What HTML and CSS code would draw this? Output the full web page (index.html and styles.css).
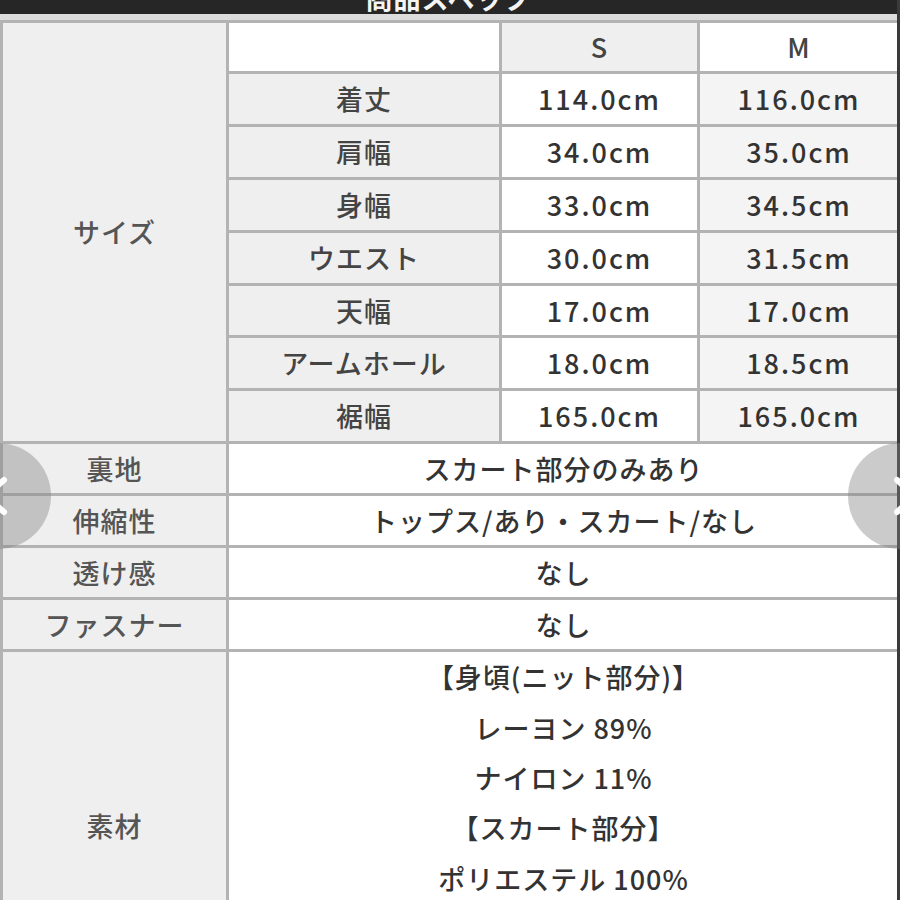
FILE: index.html
```html
<!DOCTYPE html>
<html lang="ja">
<head>
<meta charset="utf-8">
<title>商品スペック</title>
<link rel="stylesheet" href="styles.css">
</head>
<body>
<div class="page">
  <div class="sheet">
    <div class="titlebar"><div class="title">商品スペック</div></div>
    <div class="gap"></div>
    <table class="spec">
      <colgroup>
        <col class="c1"><col class="c2"><col class="c3"><col class="c4">
      </colgroup>
      <tr class="r-head">
        <th class="lab" rowspan="8">サイズ</th>
        <td class="blank"></td>
        <td class="sz g">S</td>
        <td class="sz w">M</td>
      </tr>
      <tr class="r"><td class="sub">着丈</td><td class="v w">114.0cm</td><td class="v m">116.0cm</td></tr>
      <tr class="r"><td class="sub">肩幅</td><td class="v w">34.0cm</td><td class="v m">35.0cm</td></tr>
      <tr class="r"><td class="sub">身幅</td><td class="v w">33.0cm</td><td class="v m">34.5cm</td></tr>
      <tr class="r"><td class="sub">ウエスト</td><td class="v w">30.0cm</td><td class="v m">31.5cm</td></tr>
      <tr class="r"><td class="sub">天幅</td><td class="v w">17.0cm</td><td class="v m">17.0cm</td></tr>
      <tr class="r"><td class="sub">アームホール</td><td class="v w">18.0cm</td><td class="v m">18.5cm</td></tr>
      <tr class="r"><td class="sub">裾幅</td><td class="v w">165.0cm</td><td class="v m">165.0cm</td></tr>
      <tr class="r2"><th class="lab">裏地</th><td class="wide" colspan="3">スカート部分のみあり</td></tr>
      <tr class="r2"><th class="lab">伸縮性</th><td class="wide" colspan="3">トップス/あり・スカート/なし</td></tr>
      <tr class="r2"><th class="lab">透け感</th><td class="wide" colspan="3">なし</td></tr>
      <tr class="r2"><th class="lab">ファスナー</th><td class="wide" colspan="3">なし</td></tr>
      <tr class="r3">
        <th class="lab">素材</th>
        <td class="wide mat" colspan="3">
          <div class="line">【身頃(ニット部分)】</div>
          <div class="line">レーヨン 89%</div>
          <div class="line">ナイロン 11%</div>
          <div class="line">【スカート部分】</div>
          <div class="line">ポリエステル 100%</div>
        </td>
      </tr>
    </table>
  </div>
  <div class="edge"></div>
</div>
<button class="nav prev" aria-label="前へ">
  <svg viewBox="0 0 40 60" width="40" height="60"><polyline points="30,14 12,30 30,46" fill="none" stroke="#fff" stroke-width="6" stroke-linecap="round" stroke-linejoin="round"/></svg>
</button>
<button class="nav next" aria-label="次へ">
  <svg viewBox="0 0 40 60" width="40" height="60"><polyline points="10,14 28,30 10,46" fill="none" stroke="#fff" stroke-width="6" stroke-linecap="round" stroke-linejoin="round"/></svg>
</button>
</body>
</html>
```
FILE: styles.css
```css
html, body {
  margin: 0;
  padding: 0;
  background: #ffffff;
  overflow: hidden;
}
body {
  width: 900px;
  height: 900px;
  position: relative;
  font-family: "Noto Sans CJK JP", "Noto Sans", sans-serif;
}
.page {
  display: flex;
  width: 900px;
  height: 900px;
  overflow: hidden;
}
.sheet {
  width: 897px;
  flex: none;
}
.edge {
  flex: 1;
  background: #3a3a3a;
}
.titlebar {
  height: 14px;
  background: #262626;
  overflow: hidden;
  text-align: center;
}
.title {
  margin-top: -16px;
  line-height: 27px;
  font-size: 27px;
  font-weight: 700;
  color: #f4f4f4;
  letter-spacing: 1px;
}
.gap {
  height: 6px;
  background: #dcdcdc;
}
.spec {
  width: 898px;
  border-collapse: collapse;
  table-layout: fixed;
  font-size: 27px;
  color: #333;
  letter-spacing: 1px;
}
.c1 { width: 226px; }
.c2 { width: 273px; }
.c3 { width: 198px; }
.c4 { width: 201px; }
.spec th, .spec td {
  border: 3px solid #b3b3b3;
  padding: 0;
  text-align: center;
  vertical-align: middle;
  font-weight: 500;
  line-height: 30px;
}
.spec .lab {
  background: #efefef;
  color: #555;
}
.spec .sub {
  background: #efefef;
  color: #444;
}
.spec .v { letter-spacing: 2px; }
.spec .blank, .spec .w, .spec .wide { background: #ffffff; }
.spec .g { background: #efefef; }
.spec .m { background: #f4f4f4; }
.spec .sz { color: #444; }
.r-head { height: 51px; }
.r { height: 52.9px; }
.r2 { height: 52px; }
.spec .mat {
  vertical-align: top;
  padding-top: 9px;
  padding-bottom: 87px;
}
.line {
  height: 50.4px;
  line-height: 32px;
}
.nav {
  position: absolute;
  top: 443px;
  width: 106px;
  height: 106px;
  border-radius: 50%;
  border: none;
  padding: 0;
  background: rgba(130, 130, 130, 0.42);
  display: flex;
  align-items: center;
}
.prev {
  left: -55px;
  justify-content: flex-end;
}
.next {
  left: 848px;
  justify-content: flex-start;
}
.prev svg { margin-right: 37px; }
.next svg { margin-left: 39px; }
```
